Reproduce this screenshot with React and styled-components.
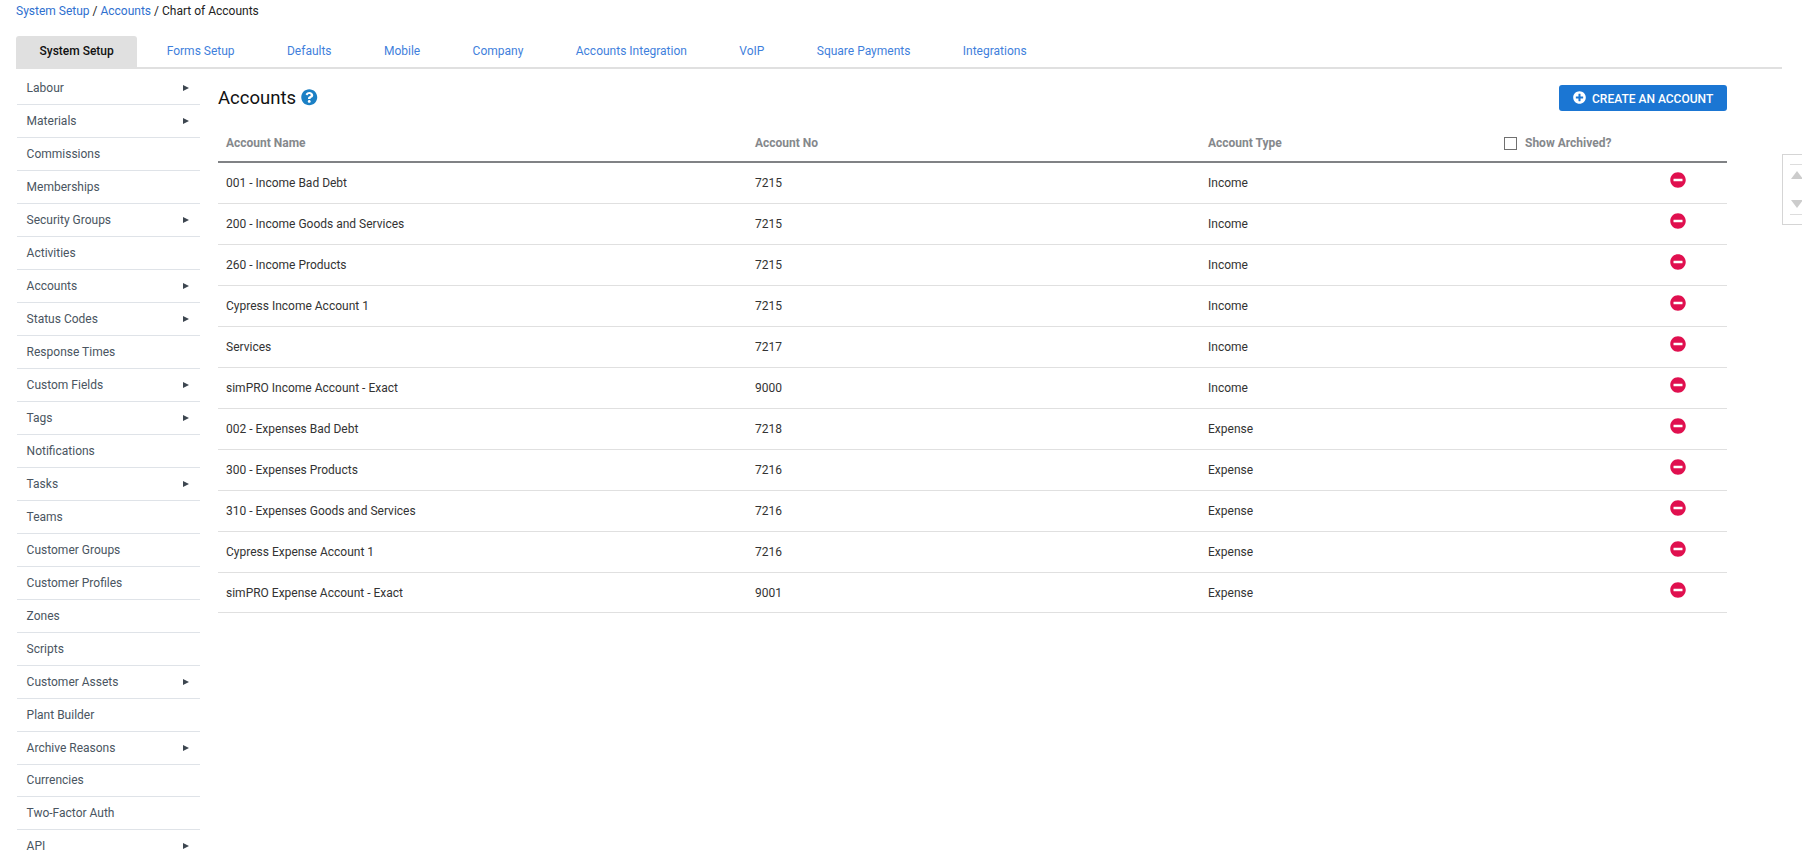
import React from "react";
import styled, { createGlobalStyle } from "styled-components";
import { FaMinusCircle, FaPlusCircle, FaQuestionCircle } from "react-icons/fa";

const GlobalStyle = createGlobalStyle`
  html, body {
    margin: 0;
    height: 100%;
    overflow: hidden;
    background: #fff;
    font-family: Roboto, "Liberation Sans", sans-serif;
    font-size: 12px;
    color: #333;
  }
  * { box-sizing: border-box; }
`;

const Page = styled.div`
  height: 860px;
  overflow: hidden;
  padding: 0 20px 0 16px;
`;

const Breadcrumbs = styled.div`
  height: 36px;
  padding-top: 4px;
  line-height: 15px;
  color: #222;
`;

const Crumb = styled.a`
  color: #2f70cf;
  text-decoration: none;
`;

const Tabs = styled.nav`
  display: flex;
  gap: 6.4px;
  height: 33px;
  border-bottom: 2px solid #e0e0e0;
`;

const Tab = styled.a`
  display: flex;
  align-items: center;
  height: 31px;
  padding: 0 ${(p) => (p.$active ? "23.5px" : "23px")} 2px;
  border-radius: 3px 3px 0 0;
  color: ${(p) => (p.$active ? "#111" : "#3f7fdc")};
  background: ${(p) => (p.$active ? "#e0e0e0" : "transparent")};
  font-weight: ${(p) => (p.$active ? 500 : 400)};
`;

const Body = styled.div`
  display: flex;
  align-items: flex-start;
`;

const Sidebar = styled.ul`
  flex: 0 0 183px;
  margin: 0 0 0 1px;
  padding: 3.5px 0 0;
  list-style: none;
`;

const SideItem = styled.li`
  display: flex;
  align-items: center;
  justify-content: space-between;
  height: 32.96px;
  padding: 0 11px 0 9.6px;
  border-bottom: 1px solid #dfe3e8;
  color: #4a5561;
`;

const Caret = styled.span`
  width: 0;
  height: 0;
  border-style: solid;
  border-width: 3.5px 0 3.5px 6px;
  border-color: transparent transparent transparent #3d4650;
`;

const Main = styled.main`
  flex: 1;
  min-width: 0;
  margin-left: 18px;
  padding-right: 55px;
`;

const TitleBar = styled.div`
  display: flex;
  align-items: center;
  justify-content: space-between;
  height: 54px;
  padding-top: 4px;
`;

const Title = styled.h1`
  display: flex;
  align-items: center;
  gap: 5px;
  margin: 0;
  font-size: 18.5px;
  font-weight: 400;
  color: #111;
`;

const HelpIcon = styled(FaQuestionCircle)`
  margin-top: -1px;
  font-size: 16.5px;
  color: #1b80c5;
`;

const CreateButton = styled.button`
  display: flex;
  align-items: center;
  gap: 6px;
  width: 168px;
  height: 26px;
  padding: 1px 0 0 14px;
  border: 0;
  border-radius: 3px;
  background: #1b76d3;
  color: #fff;
  font-family: inherit;
  font-size: 12px;
  font-weight: 500;
  text-transform: uppercase;
  svg { font-size: 13px; margin-top: -3px; }
`;

const TableRow = styled.div`
  display: grid;
  grid-template-columns: 529px 453px 296px 1fr;
  align-items: center;
  height: 40.96px;
  padding: 0 0 0 8px;
  border-bottom: 1px solid #e0e0e0;
`;

const HeaderRow = styled(TableRow)`
  height: 40px;
  padding: 2px 0 0 8px;
  border-bottom: 2px solid #808285;
  color: #85888c;
  font-weight: 700;
`;

const ArchivedToggle = styled.label`
  display: flex;
  align-items: center;
  gap: 8px;
`;

const CheckBox = styled.span`
  width: 13px;
  height: 13px;
  border: 1px solid #707070;
`;

const RemoveCell = styled.div`
  display: flex;
  padding-left: 166px;
`;

const RemoveIcon = styled(FaMinusCircle)`
  margin-top: -6px;
  font-size: 16px;
  color: #e0104f;
`;

const Stepper = styled.div`
  position: fixed;
  top: 154px;
  right: 0;
  width: 20px;
  height: 71px;
  padding: 9px 0 9px 7px;
  border: 1px solid #d5d5d5;
  border-right: 0;
`;

const StepperInner = styled.div`
  display: flex;
  flex-direction: column;
  justify-content: space-between;
  height: 100%;
  padding: 6px 0 6px 1px;
  border-top: 1px solid #ddd;
  border-bottom: 1px solid #ddd;
`;

const StepArrow = styled.span`
  width: 0;
  height: 0;
  border-style: solid;
  border-width: ${(p) => (p.$down ? "8px 6px 0 6px" : "0 6px 8px 6px")};
  border-color: ${(p) =>
    p.$down
      ? "#ccc transparent transparent transparent"
      : "transparent transparent #ccc transparent"};
`;

const tabs = ["System Setup", "Forms Setup", "Defaults", "Mobile", "Company", "Accounts Integration", "VoIP", "Square Payments", "Integrations"];

const menu = [
  ["Labour", true], ["Materials", true], ["Commissions"], ["Memberships"],
  ["Security Groups", true], ["Activities"], ["Accounts", true], ["Status Codes", true],
  ["Response Times"], ["Custom Fields", true], ["Tags", true], ["Notifications"],
  ["Tasks", true], ["Teams"], ["Customer Groups"], ["Customer Profiles"], ["Zones"],
  ["Scripts"], ["Customer Assets", true], ["Plant Builder"], ["Archive Reasons", true],
  ["Currencies"], ["Two-Factor Auth"], ["API", true],
];

const accounts = [
  ["001 - Income Bad Debt", "7215", "Income"],
  ["200 - Income Goods and Services", "7215", "Income"],
  ["260 - Income Products", "7215", "Income"],
  ["Cypress Income Account 1", "7215", "Income"],
  ["Services", "7217", "Income"],
  ["simPRO Income Account - Exact", "9000", "Income"],
  ["002 - Expenses Bad Debt", "7218", "Expense"],
  ["300 - Expenses Products", "7216", "Expense"],
  ["310 - Expenses Goods and Services", "7216", "Expense"],
  ["Cypress Expense Account 1", "7216", "Expense"],
  ["simPRO Expense Account - Exact", "9001", "Expense"],
];

export default function App() {
  return (
    <Page>
      <GlobalStyle />
      <Breadcrumbs>
        <Crumb>System Setup</Crumb> / <Crumb>Accounts</Crumb> / Chart of Accounts
      </Breadcrumbs>
      <Tabs>
        {tabs.map((t, i) => (
          <Tab key={t} $active={i === 0}>{t}</Tab>
        ))}
      </Tabs>
      <Body>
        <Sidebar>
          {menu.map(([label, sub]) => (
            <SideItem key={label}>
              {label}
              {sub && <Caret />}
            </SideItem>
          ))}
        </Sidebar>
        <Main>
          <TitleBar>
            <Title>Accounts <HelpIcon /></Title>
            <CreateButton><FaPlusCircle /> Create an Account</CreateButton>
          </TitleBar>
          <HeaderRow>
            <div>Account Name</div>
            <div>Account No</div>
            <div>Account Type</div>
            <ArchivedToggle><CheckBox /> Show Archived?</ArchivedToggle>
          </HeaderRow>
          {accounts.map(([name, no, type]) => (
            <TableRow key={name}>
              <div>{name}</div>
              <div>{no}</div>
              <div>{type}</div>
              <RemoveCell><RemoveIcon /></RemoveCell>
            </TableRow>
          ))}
        </Main>
      </Body>
      <Stepper>
        <StepperInner>
          <StepArrow />
          <StepArrow $down />
        </StepperInner>
      </Stepper>
    </Page>
  );
}
